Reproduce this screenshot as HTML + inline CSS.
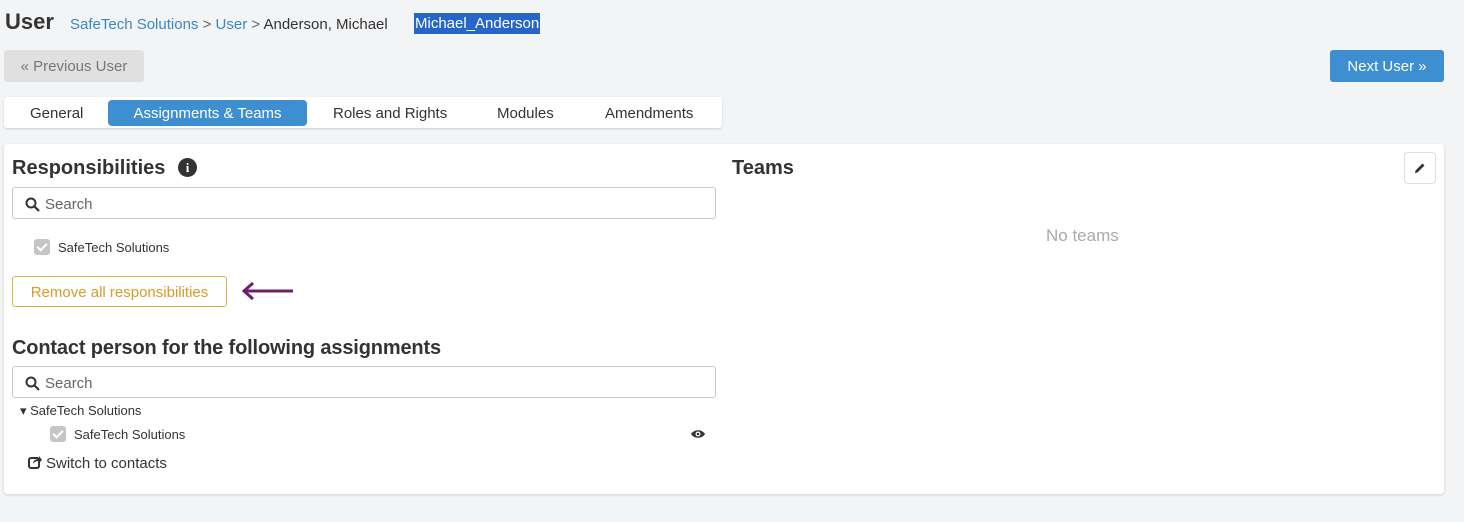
<!DOCTYPE html>
<html><head><meta charset="utf-8"><style>
*{box-sizing:border-box;margin:0;padding:0}
body{width:1464px;height:522px;background:#f3f4f6;font-family:"Liberation Sans",sans-serif;color:#333;position:relative;overflow:hidden}
.a{position:absolute;white-space:nowrap}
.search{position:absolute;left:12px;width:704px;height:32px;border:1px solid #c8c8c8;border-radius:3px;background:#fff}
.search span{position:absolute;left:32px;top:8px;font-size:15px;color:#666}
.search svg{position:absolute;left:12px;top:9px}
.cb{position:absolute;width:16px;height:16px;background:#c5c5c5;border-radius:3px}
.cb::after{content:"";position:absolute;left:5px;top:2px;width:4px;height:8px;border:solid #fff;border-width:0 2px 2px 0;transform:rotate(45deg)}
</style></head><body>
<div class="a" style="left:5px;top:9px;font-size:22px;font-weight:bold;color:#333">User</div>
<div class="a" style="left:70px;top:16px;font-size:15px;color:#3a87c8">SafeTech Solutions <span style="color:#666">&gt;</span> User <span style="color:#666">&gt;</span> <span style="color:#333">Anderson, Michael</span></div>
<div class="a" style="left:414px;top:13px;height:21px;padding:1px 1px;background:#2566c8;color:#fff;font-size:15px;line-height:20px">Michael_Anderson</div>
<div class="a" style="left:4px;top:50px;width:140px;height:32px;background:#e0e0e0;border-radius:3px;color:#777;font-size:15px;line-height:34px;text-align:center">« Previous User</div>
<div class="a" style="left:1330px;top:50px;width:114px;height:32px;background:#3d8fd1;border-radius:3px;color:#fff;font-size:15px;line-height:34px;text-align:center">Next User »</div>
<div class="a" style="left:4px;top:97px;width:718px;height:31px;background:#fff;border-radius:3px;box-shadow:0 1px 2px rgba(0,0,0,.15)"></div>
<div class="a" style="left:30px;top:105px;font-size:15px">General</div>
<div class="a" style="left:108px;top:100px;width:199px;height:26px;background:#3d8fd1;border-radius:4px;color:#fff;font-size:15px;line-height:28px;text-align:center">Assignments &amp; Teams</div>
<div class="a" style="left:333px;top:105px;font-size:15px">Roles and Rights</div>
<div class="a" style="left:497px;top:105px;font-size:15px">Modules</div>
<div class="a" style="left:605px;top:105px;font-size:15px">Amendments</div>
<div class="a" style="left:4px;top:144px;width:1440px;height:350px;background:#fff;border-radius:4px;box-shadow:0 1px 3px rgba(0,0,0,.15)"></div>
<div class="a" style="left:12px;top:157px;font-size:20px;font-weight:bold;color:#333">Responsibilities</div>
<div class="a" style="left:178px;top:158px;width:19px;height:19px;border-radius:50%;background:#333;color:#fff;font-size:13px;font-weight:bold;text-align:center;line-height:19px;font-family:'Liberation Serif',serif">i</div>
<div class="search" style="top:187px"><svg width="15" height="15" viewBox="0 0 15 15"><circle cx="6" cy="6" r="4.5" fill="none" stroke="#333" stroke-width="2"/><path d="M9.5 9.5L14 14" stroke="#333" stroke-width="2.2"/></svg><span>Search</span></div>
<div class="cb" style="left:34px;top:239px"></div>
<div class="a" style="left:58px;top:240px;font-size:13px">SafeTech Solutions</div>
<div class="a" style="left:12px;top:276px;width:215px;height:31px;border:1px solid #e0b045;border-radius:3px;color:#d99a2a;font-size:15px;line-height:31px;text-align:center">Remove all responsibilities</div>
<svg class="a" style="left:242px;top:281px" width="52" height="20" viewBox="0 0 52 20"><path d="M2 10H51M11 2L2 10L11 18" fill="none" stroke="#6e1f6e" stroke-width="3"/></svg>
<div class="a" style="left:12px;top:337px;font-size:20px;font-weight:bold;letter-spacing:-0.15px">Contact person for the following assignments</div>
<div class="search" style="top:366px"><svg width="15" height="15" viewBox="0 0 15 15"><circle cx="6" cy="6" r="4.5" fill="none" stroke="#333" stroke-width="2"/><path d="M9.5 9.5L14 14" stroke="#333" stroke-width="2.2"/></svg><span>Search</span></div>
<div class="a" style="left:20px;top:403px;font-size:13px">▾ SafeTech Solutions</div>
<div class="cb" style="left:50px;top:426px"></div>
<div class="a" style="left:74px;top:427px;font-size:13px">SafeTech Solutions</div>
<svg class="a" style="left:691px;top:429px" width="14" height="10" viewBox="0 0 14 10"><path d="M0 5C3 0 11 0 14 5C11 10 3 10 0 5Z" fill="#333"/><circle cx="7" cy="5" r="2.5" fill="#fff"/><circle cx="7" cy="5" r="1.3" fill="#333"/></svg>
<svg class="a" style="left:28px;top:455px" width="14" height="14" viewBox="0 0 14 14"><rect x="1" y="3" width="10" height="10" rx="2" fill="none" stroke="#333" stroke-width="2"/><path d="M5 9C5 5 8 4 11 4V1L14 5L11 8V6C8 6 6 7 5 9Z" fill="#333"/></svg>
<div class="a" style="left:46px;top:455px;font-size:15px">Switch to contacts</div>
<div class="a" style="left:732px;top:157px;font-size:20px;font-weight:bold">Teams</div>
<div class="a" style="left:1404px;top:152px;width:32px;height:32px;border:1px solid #ddd;border-radius:4px;background:#fff"></div>
<svg class="a" style="left:1414px;top:162px" width="12" height="12" viewBox="0 0 12 12"><path d="M1 11L1.5 8.5L8.5 1.5L10.5 3.5L3.5 10.5Z" fill="#333"/></svg>
<div class="a" style="left:1046px;top:226px;font-size:17px;color:#aaa">No teams</div>
</body></html>
